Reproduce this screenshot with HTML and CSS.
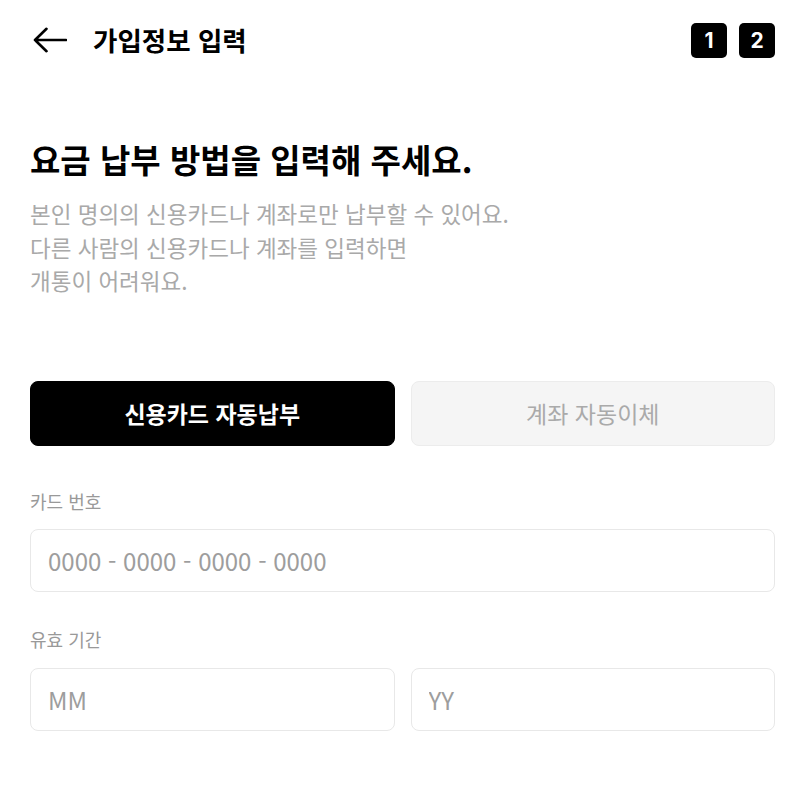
FILE: index.html
```html
<!DOCTYPE html>
<html lang="ko">
<head>
<meta charset="utf-8">
<title>가입정보 입력</title>
<link rel="stylesheet" href="styles.css">
</head>
<body>
<header class="topbar">
  <div class="topbar-left">
    <svg class="back" width="34" height="26" viewBox="0 0 34 26" aria-hidden="true">
      <path d="M2 13 H33 M13.5 1.8 L2 13 L13.5 24.2" fill="none" stroke="#000" stroke-width="2.6" stroke-linecap="round" stroke-linejoin="round"/>
    </svg>
    <h1 class="title">가입정보 입력</h1>
  </div>
  <div class="steps">
    <span class="step">1</span>
    <span class="step">2</span>
  </div>
</header>
<main class="content">
  <h2 class="heading">요금 납부 방법을 입력해 주세요.</h2>
  <p class="desc">본인 명의의 신용카드나 계좌로만 납부할 수 있어요.<br>다른 사람의 신용카드나 계좌를 입력하면<br>개통이 어려워요.</p>
  <div class="tabs">
    <button class="tab tab-active">신용카드 자동납부</button>
    <button class="tab">계좌 자동이체</button>
  </div>
  <label class="label label-card">카드 번호</label>
  <input class="field" type="text" placeholder="0000 - 0000 - 0000 - 0000">
  <label class="label label-exp">유효 기간</label>
  <div class="row">
    <input class="field" type="text" placeholder="MM">
    <input class="field" type="text" placeholder="YY">
  </div>
</main>
</body>
</html>
```
FILE: styles.css
```css
* { box-sizing: border-box; }
html, body { margin: 0; padding: 0; background: #fff; }
body {
  font-family: "Noto Sans CJK KR", "Noto Sans", sans-serif;
  color: #000;
  width: 800px;
}
.topbar {
  height: 80px;
  display: flex;
  align-items: center;
  justify-content: space-between;
  padding: 0 25px 0 33px;
}
.topbar-left { display: flex; align-items: center; }
.back { display: block; margin-right: 26px; }
.title {
  margin: 0;
  font-size: 26.5px;
  font-weight: 700;
  line-height: 1;
}
.steps { display: flex; gap: 12px; }
.step {
  width: 36px;
  height: 35px;
  background: #000;
  color: #fff;
  border-radius: 5px;
  display: flex;
  align-items: center;
  justify-content: center;
  font-family: Inter, "Liberation Sans", sans-serif;
  font-weight: 700;
  font-size: 21px;
}
.content { padding: 0 25px 0 30px; display: flex; flex-direction: column; }
.heading {
  margin: 59px 0 0;
  font-size: 33px;
  line-height: 40px;
  font-weight: 700;
}
.desc {
  margin: 18px 0 0;
  font-size: 22.5px;
  line-height: 33.5px;
  color: #a9a9a9;
}
.tabs {
  margin-top: 83px;
  display: grid;
  grid-template-columns: 1fr 1fr;
  gap: 16px;
}
.tab {
  height: 65px;
  border-radius: 8px;
  border: 1px solid #ececec;
  background: #f5f5f5;
  color: #aaa;
  font-family: inherit;
  font-size: 23px;
  font-weight: 400;
  padding: 0;
}
.tab-active {
  background: #000;
  border-color: #000;
  color: #fff;
  font-weight: 700;
}
.label {
  font-size: 18px;
  line-height: 24px;
  color: #999;
}
.label-card { margin-top: 43px; }
.label-exp { margin-top: 35px; }
.field {
  margin-top: 16px;
  height: 63px;
  width: 100%;
  border: 1px solid #e8e8e8;
  border-radius: 8px;
  padding: 0 17px;
  font-family: inherit;
  font-size: 24px;
  color: #000;
  background: #fff;
  outline: none;
}
.field::placeholder { color: #9d9d9d; }
.row {
  display: grid;
  grid-template-columns: 1fr 1fr;
  gap: 16px;
}
.row .field { margin-top: 17px; }
```
